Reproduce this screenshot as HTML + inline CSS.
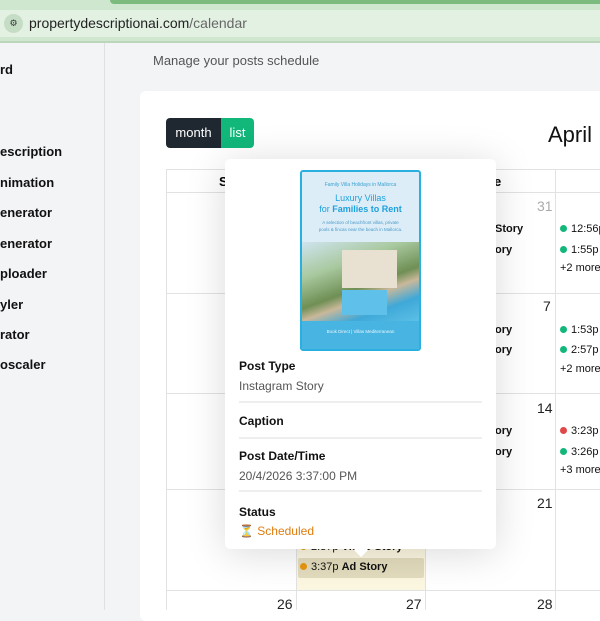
<!DOCTYPE html>
<html><head><meta charset="utf-8"><style>
*{box-sizing:border-box;margin:0;padding:0}
body{width:600px;height:610px;overflow:hidden;font-family:"Liberation Sans","DejaVu Sans",sans-serif;background:#f3f4f6;position:relative}
.abs{position:absolute}
.side div{position:absolute;left:0;font-weight:bold;font-size:13px;color:#111}
.line{position:absolute;background:#e2e2e2}
.ev{position:absolute;font-size:11px;color:#111;white-space:nowrap}
.dot{display:inline-block;width:7px;height:7px;border-radius:50%;margin-right:4px;vertical-align:0}
.num{position:absolute;font-size:14px;color:#222}
.pl{position:absolute;left:239px;font-size:12px;font-weight:bold;color:#111}
.pv{position:absolute;left:239px;font-size:12px;color:#555}
.hr{position:absolute;left:239px;width:243px;height:2px;background:#eee}
</style></head><body>
<div class="abs" style="left:0;top:0;width:600px;height:42px;background:#cfe6cf"></div>
<div class="abs" style="left:110px;top:0;width:490px;height:4px;background:#7cbb7e;border-bottom-left-radius:6px"></div>
<div class="abs" style="left:0;top:10px;width:600px;height:27px;background:#e3f1e3"></div>
<div class="abs" style="left:4px;top:14px;width:19px;height:19px;border-radius:50%;background:#c5dcc5;font-size:9px;text-align:center;line-height:19px;color:#333">⚙</div>
<div class="abs" style="left:29px;top:15px;font-size:14px;color:#222">propertydescriptionai.com<span style="color:#666">/calendar</span></div>
<div class="abs" style="left:0;top:41px;width:600px;height:2px;background:#bcd6bc"></div>
<div class="abs" style="left:104px;top:43px;width:1px;height:567px;background:#e0e0e0"></div>
<div class="side">
<div style="top:62px">rd</div>
<div style="top:144px">escription</div>
<div style="top:175px">nimation</div>
<div style="top:205px">enerator</div>
<div style="top:236px">enerator</div>
<div style="top:266px">ploader</div>
<div style="top:297px">yler</div>
<div style="top:327px">rator</div>
<div style="top:357px">oscaler</div>
</div>
<div class="abs" style="left:153px;top:53px;font-size:13px;color:#555">Manage your posts schedule</div>
<div class="abs" style="left:140px;top:91px;width:470px;height:530px;background:#fff;border-radius:6px"></div>
<div class="abs" style="left:166px;top:118px;width:55px;height:30px;background:#1f2731;border-radius:4px 0 0 4px;color:#fff;font-size:13px;line-height:30px;text-align:center">month</div>
<div class="abs" style="left:221px;top:118px;width:33px;height:30px;background:#12b77a;border-radius:0 4px 4px 0;color:#fff;font-size:13px;line-height:30px;text-align:center">list</div>
<div class="abs" style="left:548px;top:122px;font-size:22px;color:#111">April</div>
<div class="line" style="left:166px;top:169px;width:434px;height:1px"></div>
<div class="line" style="left:166px;top:192px;width:434px;height:1px"></div>
<div class="line" style="left:166px;top:293px;width:434px;height:1px"></div>
<div class="line" style="left:166px;top:393px;width:434px;height:1px"></div>
<div class="line" style="left:166px;top:489px;width:434px;height:1px"></div>
<div class="line" style="left:166px;top:590px;width:434px;height:1px"></div>
<div class="line" style="left:166px;top:169px;width:1px;height:441px"></div>
<div class="line" style="left:296px;top:169px;width:1px;height:441px"></div>
<div class="line" style="left:425px;top:169px;width:1px;height:441px"></div>
<div class="line" style="left:555px;top:169px;width:1px;height:441px"></div>
<div class="abs" style="left:297px;top:490px;width:128px;height:100px;background:#fcf7e0"></div>
<div class="abs" style="left:219px;top:174px;font-weight:bold;font-size:13px">S</div>
<div class="abs" style="left:494px;top:174px;font-weight:bold;font-size:13px">e</div>
<div class="num" style="left:537px;top:198px;color:#aaa">31</div>
<div class="num" style="left:543px;top:298px">7</div>
<div class="num" style="left:537px;top:400px">14</div>
<div class="num" style="left:537px;top:495px">21</div>
<div class="num" style="left:277px;top:596px">26</div>
<div class="num" style="left:406px;top:596px">27</div>
<div class="num" style="left:537px;top:596px">28</div>
<div class="ev" style="left:495px;top:223px;font-weight:bold">Story</div>
<div class="ev" style="left:495px;top:244px;font-weight:bold">ory</div>
<div class="ev" style="left:495px;top:324px;font-weight:bold">ory</div>
<div class="ev" style="left:495px;top:344px;font-weight:bold">ory</div>
<div class="ev" style="left:495px;top:425px;font-weight:bold">ory</div>
<div class="ev" style="left:495px;top:446px;font-weight:bold">ory</div>
<div class="ev" style="left:560px;top:223px"><span class="dot" style="background:#12b77a"></span>12:56p</div>
<div class="ev" style="left:560px;top:244px"><span class="dot" style="background:#12b77a"></span>1:55p '</div>
<div class="ev" style="left:560px;top:262px">+2 more</div>
<div class="ev" style="left:560px;top:324px"><span class="dot" style="background:#12b77a"></span>1:53p .</div>
<div class="ev" style="left:560px;top:344px"><span class="dot" style="background:#12b77a"></span>2:57p '</div>
<div class="ev" style="left:560px;top:363px">+2 more</div>
<div class="ev" style="left:560px;top:425px"><span class="dot" style="background:#e04848"></span>3:23p .</div>
<div class="ev" style="left:560px;top:446px"><span class="dot" style="background:#12b77a"></span>3:26p .</div>
<div class="ev" style="left:560px;top:464px">+3 more</div>
<div class="ev" style="left:300px;top:541px"><span class="dot" style="background:#e8960f"></span>2:37p <b>Video Story</b></div>
<div class="abs" style="left:298px;top:558px;width:126px;height:20px;background:#e3dcbd;border-radius:2px"></div>
<div class="ev" style="left:300px;top:561px"><span class="dot" style="background:#e8960f"></span>3:37p <b>Ad Story</b></div>
<div class="abs" style="left:225px;top:159px;width:271px;height:390px;background:#fff;border-radius:5px;box-shadow:0 4px 40px rgba(0,0,0,0.15)"></div>
<div class="abs" style="left:356px;top:545px;width:10px;height:10px;background:#fff;transform:rotate(45deg)"></div>
<div class="abs" style="left:300px;top:170px;width:121px;height:181px;border:2px solid #2ab0e0;border-radius:3px;background:#dcedf8;overflow:hidden">
 <div style="font-size:5px;color:#3aa0d0;text-align:center;margin-top:10px">Family Villa Holidays in Mallorca</div>
 <div style="font-size:9px;color:#1ea0dc;text-align:center;margin-top:5px;line-height:11px">Luxury Villas<br>for <b>Families to Rent</b></div>
 <div style="font-size:4.5px;color:#4a9ac8;text-align:center;margin-top:4px;line-height:7px">A selection of beachfront villas, private<br>pools &amp; fincas near the beach in Mallorca.</div>
 <div style="position:absolute;left:0;top:70px;width:117px;height:79px;background:linear-gradient(160deg,#cfe4ef 0%,#a9c9a0 30%,#6f8f55 55%,#c9b89a 65%,#3fa8d8 80%,#5cc0e6 100%)"></div>
 <div style="position:absolute;left:40px;top:78px;width:55px;height:38px;background:#e8e0d0"></div>
 <div style="position:absolute;left:40px;top:118px;width:45px;height:25px;background:#5fc0ea"></div>
 <div style="position:absolute;left:0;top:149px;width:117px;height:30px;background:#48b4e2;font-size:4.5px;color:#e8f6fd;text-align:center;line-height:22px">Book Direct | Villas Mediterranean</div>
</div>
<div class="pl" style="top:359px">Post Type</div>
<div class="pv" style="top:379px">Instagram Story</div>
<div class="hr" style="top:401px"></div>
<div class="pl" style="top:414px">Caption</div>
<div class="hr" style="top:437px"></div>
<div class="pl" style="top:449px">Post Date/Time</div>
<div class="pv" style="top:469px">20/4/2026 3:37:00 PM</div>
<div class="hr" style="top:490px"></div>
<div class="pl" style="top:505px">Status</div>
<div class="pv" style="top:524px;color:#e07d0f">⏳ Scheduled</div>
</body></html>
